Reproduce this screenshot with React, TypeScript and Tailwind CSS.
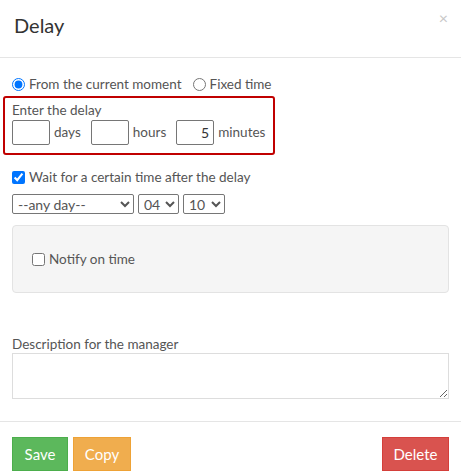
import React from "react";

const font = { fontFamily: "Lato, 'Liberation Sans', sans-serif" };

function NumBox({ value }: { value?: string }) {
  return (
    <input
      type="text"
      defaultValue={value}
      className="w-[38px] h-[25px] border border-[#767676] rounded-[2px] px-[4px] text-right text-[14px] text-[#333] outline-none"
    />
  );
}

export default function App() {
  return (
    <div className="w-[461px] h-[476px] bg-white text-[#555] text-[13.5px]" style={font}>
      <div className="h-[58px] border-b border-[#e5e5e5] pl-[14px] pr-[13px] pt-[12px] flex justify-between">
        <h4 className="text-[20px] leading-[26px] text-[#333]">Delay</h4>
        <button className="text-[#c8c8c8] text-[16px] leading-none -mt-[2px] h-[14px]">×</button>
      </div>

      <div className="px-[12px] pt-[18px]">
        <div className="flex items-center h-[16px] gap-[4px]">
          <input type="radio" name="mode" defaultChecked className="m-0 w-[13px] h-[13px]" />
          <span>From the current moment</span>
          <input type="radio" name="mode" className="m-0 w-[13px] h-[13px] ml-[7px]" />
          <span>Fixed time</span>
        </div>

        <div className="-mx-[9px] mt-[4px] w-[272px] h-[59px] border-2 border-[#c00000] rounded-[3px] px-[7px] pt-[4px]">
          <div className="leading-[17px]">Enter the delay</div>
          <div className="flex items-center gap-[4px] mt-[1px]">
            <NumBox />
            <span className="mr-[6px]">days</span>
            <NumBox />
            <span className="mr-[6px]">hours</span>
            <NumBox value="5" />
            <span>minutes</span>
          </div>
        </div>

        <div className="flex items-center gap-[4px] mt-[14px] h-[16px]">
          <input type="checkbox" defaultChecked className="m-0 w-[13px] h-[13px]" />
          <span>Wait for a certain time after the delay</span>
        </div>

        <div className="flex gap-[4px] mt-[9px]">
          <select className="w-[122px] h-[20px] border border-[#767676] rounded-[2px] text-[14px] leading-[18px] pl-[1px]">
            <option>--any day--</option>
          </select>
          <select className="w-[41px] h-[20px] border border-[#767676] rounded-[2px] text-[14px] pl-[1px]">
            <option>04</option>
          </select>
          <select className="w-[42px] h-[20px] border border-[#767676] rounded-[2px] text-[14px] pl-[1px]">
            <option>10</option>
          </select>
        </div>

        <div className="mt-[11px] h-[68px] bg-[#f5f5f5] border border-[#e3e3e3] rounded-[4px] px-[19px] flex items-center">
          <label className="flex items-center gap-[4px]">
            <input type="checkbox" className="m-0 w-[13px] h-[13px]" />
            <span>Notify on time</span>
          </label>
        </div>

        <div className="mt-[43px] leading-[17px]">Description for the manager</div>
        <textarea className="block mt-0 w-full h-[46px] border border-[#ddd] outline-none" />
      </div>

      <div className="mt-[22px] border-t border-[#e5e5e5] px-[12px] pt-[15px] flex">
        <button className="h-[34px] w-[56px] bg-[#5cb85c] border border-[#4cae4c] text-white text-[15px]">Save</button>
        <button className="ml-[5px] h-[34px] w-[58px] bg-[#f0ad4e] border border-[#eea236] text-white text-[15px]">Copy</button>
        <button className="ml-auto h-[34px] w-[67px] bg-[#d9534f] border border-[#d43f3a] text-white text-[15px]">Delete</button>
      </div>
    </div>
  );
}
